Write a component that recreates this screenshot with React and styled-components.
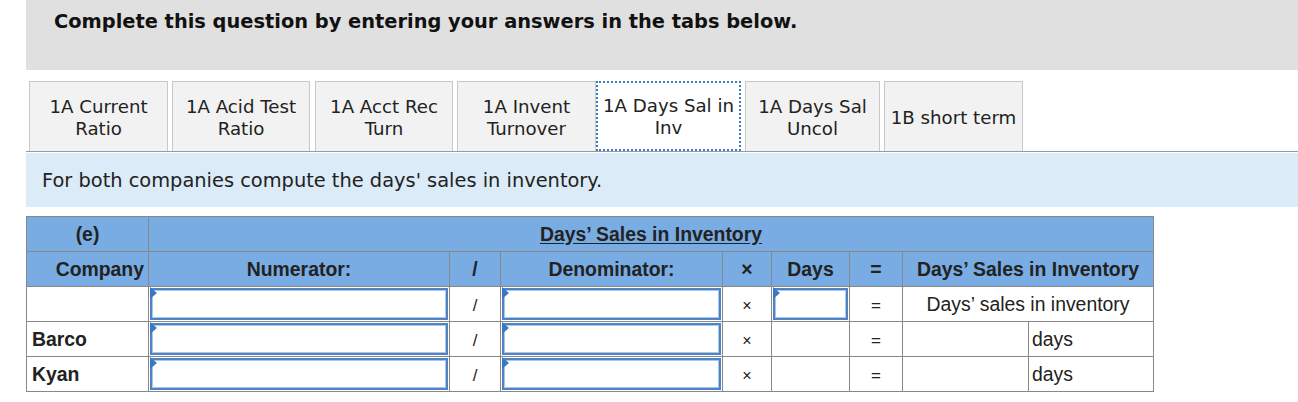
import styled, { createGlobalStyle } from "styled-components";

const GlobalStyle = createGlobalStyle`
  body {
    margin: 0;
    background: #fff;
    font-family: "DejaVu Sans", Verdana, sans-serif;
    color: #222;
  }
`;

const Page = styled.div`
  padding-left: 26px;
`;

const Banner = styled.div`
  height: 70px;
  background: #e0e0e0;
  padding: 10px 0 0 28px;
  box-sizing: border-box;
  font-size: 19.4px;
  font-weight: 700;
  color: #111;
`;

const TabBar = styled.div`
  display: flex;
  align-items: stretch;
  margin-top: 11px;
  padding-left: 3px;
  height: 70px;
  border-bottom: 1px solid #9a9a9a;
`;

const Tab = styled.div`
  width: ${(p) => p.$w}px;
  margin-right: ${(p) => (p.$active ? 4 : p.$gap ?? 4)}px;
  margin-left: ${(p) => (p.$active ? -4 : 0)}px;
  box-sizing: border-box;
  display: flex;
  align-items: center;
  justify-content: center;
  text-align: center;
  font-size: 18.2px;
  line-height: 22px;
  color: #222;
  white-space: nowrap;
  background: ${(p) => (p.$active ? "#fff" : "#f2f2f2")};
  border: ${(p) => (p.$active ? "2px dotted #3b7bc8" : "1px solid #c8c8c8")};
  border-bottom: ${(p) => (p.$active ? "2px dotted #3b7bc8" : "none")};
  padding-top: 2px;
`;

const Prompt = styled.div`
  margin-top: 1px;
  height: 54px;
  background: #dbebf8;
  padding-left: 16px;
  display: flex;
  align-items: center;
  font-size: 19.4px;
  color: #222;
`;

const Table = styled.table`
  margin-top: 9px;
  border-collapse: collapse;
  table-layout: fixed;
  width: 1127px;
  font-family: "Liberation Sans", Arial, sans-serif;
  font-size: 19.4px;
  color: #222;
  border: 1px solid #888;
`;

const HeadCell = styled.th`
  height: 35px;
  padding: 0 ${(p) => (p.$align === "right" ? "4px" : "0")} 0 0;
  background: #78ace3;
  border: 1px solid #888;
  font-weight: 700;
  text-align: ${(p) => p.$align || "center"};
  text-decoration: ${(p) => (p.$under ? "underline" : "none")};
  text-underline-offset: 2px;
  box-sizing: border-box;
  white-space: nowrap;
`;

const Cell = styled.td`
  height: 35px;
  padding: ${(p) => (p.$input ? "1px" : `0 0 0 ${p.$align === "left" ? p.$indent ?? 5 : 0}px`)};
  border: 1px solid #888;
  text-align: ${(p) => p.$align || "center"};
  font-weight: ${(p) => (p.$bold ? 700 : 400)};
  box-sizing: border-box;
  vertical-align: middle;
  white-space: nowrap;
`;

const InputBox = styled.div`
  position: relative;
  height: 32px;
  box-sizing: border-box;
  background: #fff;
  border: 2px solid #4f83c4;
  box-shadow: inset 0 0 0 1px #a9c6ea;

  &::before {
    content: "";
    position: absolute;
    left: -2px;
    top: -3px;
    border-top: 6px solid transparent;
    border-bottom: 6px solid transparent;
    border-left: 7px solid #3a78c6;
  }
`;

const Op = styled.span`
  font-size: ${(p) => p.$size || 18}px;
`;

const tabs = [
  { label: ["1A Current", "Ratio"], w: 139, gap: 4 },
  { label: ["1A Acid Test", "Ratio"], w: 138, gap: 5 },
  { label: ["1A Acct Rec", "Turn"], w: 138, gap: 4 },
  { label: ["1A Invent", "Turnover"], w: 139, gap: 4 },
  { label: ["1A Days Sal in", "Inv"], w: 145, active: true },
  { label: ["1A Days Sal", "Uncol"], w: 135, gap: 4 },
  { label: ["1B short term"], w: 139, gap: 4 },
];

const widths = [122, 301, 51, 222, 49, 78, 53, 126, 125];

function Input() {
  return <InputBox />;
}

function CompanyRow({ name }) {
  return (
    <tr>
      <Cell $align="left" $bold>{name}</Cell>
      <Cell $input><Input /></Cell>
      <Cell><Op $size={17}>/</Op></Cell>
      <Cell $input><Input /></Cell>
      <Cell><Op $size={16}>×</Op></Cell>
      <Cell />
      <Cell><Op $size={17}>=</Op></Cell>
      <Cell />
      <Cell $align="left" $indent={3}>days</Cell>
    </tr>
  );
}

export default function App() {
  return (
    <Page>
      <GlobalStyle />
      <Banner>Complete this question by entering your answers in the tabs below.</Banner>
      <TabBar>
        {tabs.map((t) => (
          <Tab key={t.label.join()} $w={t.w} $gap={t.gap} $active={t.active}>
            <div>
              {t.label.map((l) => (
                <div key={l}>{l}</div>
              ))}
            </div>
          </Tab>
        ))}
      </TabBar>
      <Prompt>For both companies compute the days' sales in inventory.</Prompt>
      <Table>
        <colgroup>
          {widths.map((w, i) => (
            <col key={i} style={{ width: w }} />
          ))}
        </colgroup>
        <thead>
          <tr>
            <HeadCell>(e)</HeadCell>
            <HeadCell colSpan={8} $under>Days’ Sales in Inventory</HeadCell>
          </tr>
          <tr>
            <HeadCell $align="right">Company</HeadCell>
            <HeadCell>Numerator:</HeadCell>
            <HeadCell>/</HeadCell>
            <HeadCell>Denominator:</HeadCell>
            <HeadCell>×</HeadCell>
            <HeadCell>Days</HeadCell>
            <HeadCell>=</HeadCell>
            <HeadCell colSpan={2}>Days’ Sales in Inventory</HeadCell>
          </tr>
        </thead>
        <tbody>
          <tr>
            <Cell />
            <Cell $input><Input /></Cell>
            <Cell><Op $size={17}>/</Op></Cell>
            <Cell $input><Input /></Cell>
            <Cell><Op $size={16}>×</Op></Cell>
            <Cell $input><Input /></Cell>
            <Cell><Op $size={17}>=</Op></Cell>
            <Cell colSpan={2}>Days’ sales in inventory</Cell>
          </tr>
          <CompanyRow name="Barco" />
          <CompanyRow name="Kyan" />
        </tbody>
      </Table>
    </Page>
  );
}
